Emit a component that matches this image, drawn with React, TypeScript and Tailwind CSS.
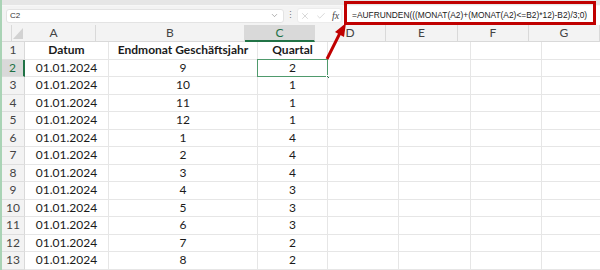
import React from "react";
import { X, Check, ChevronDown } from "lucide-react";

const colW = ["w-[84px]", "w-[149px]", "w-[70px]", "w-[71px]", "w-[72px]", "w-[71px]", "w-[71px]"];
const letters = ["A", "B", "C", "D", "E", "F", "G"];

const data: [string, string, string, string][] = [
  ["1", "Datum", "Endmonat Geschäftsjahr", "Quartal"],
  ["2", "01.01.2024", "9", "2"],
  ["3", "01.01.2024", "10", "1"],
  ["4", "01.01.2024", "11", "1"],
  ["5", "01.01.2024", "12", "1"],
  ["6", "01.01.2024", "1", "4"],
  ["7", "01.01.2024", "2", "4"],
  ["8", "01.01.2024", "3", "4"],
  ["9", "01.01.2024", "4", "3"],
  ["10", "01.01.2024", "5", "3"],
  ["11", "01.01.2024", "6", "3"],
  ["12", "01.01.2024", "7", "2"],
  ["13", "01.01.2024", "8", "2"],
];

export default function App() {
  return (
    <div className="relative w-[600px] h-[270px] overflow-hidden bg-white flex font-['Lato',sans-serif]">
      <div className="w-[2px] h-full bg-[#a9d3b5] shrink-0" />
      <div className="flex-1 flex flex-col min-w-0">
        {/* formula bar */}
        <div className="h-[25px] bg-[#f3f3f3] flex flex-col shrink-0">
          <div className="h-[6px] bg-[#e6e6e6] border-b border-[#f7f7f7]" />
          <div className="flex items-center h-[19px] font-['Liberation_Sans',sans-serif]">
            <div className="ml-[4px] w-[278px] h-[14px] bg-white rounded-[3px] border border-[#e3e3e3] flex items-center pl-[3px] pr-[4px] text-[8px] text-[#333]">
              <span className="flex-1">C2</span>
              <ChevronDown size={9} strokeWidth={1.5} className="text-[#777]" />
            </div>
            <div className="w-[13px] text-center text-[9px] text-[#777] leading-none">⋮</div>
            <div className="w-[45px] h-[15px] flex items-center bg-white rounded-[3px] border border-[#ececec]">
              <X size={10} strokeWidth={1.2} className="ml-[2px] text-[#b0b0b0]" />
              <Check size={10} strokeWidth={1.2} className="ml-[6px] text-[#b0b0b0]" />
              <span className="ml-[6px] text-[10px] italic font-['Liberation_Serif',serif] text-[#444] leading-none">fx</span>
            </div>
            <div className="flex-1 h-full bg-white ml-[1px] flex items-center pl-[9px] text-[8.4px] text-[#222] whitespace-nowrap">
              =AUFRUNDEN(((MONAT(A2)+(MONAT(A2)&lt;=B2)*12)-B2)/3;0)
            </div>
          </div>
        </div>

        {/* column header */}
        <div className="flex h-[17px] shrink-0">
          <div className="relative w-[23px] h-full bg-[#f3f3f3] border-r border-b border-[#d9d9d9]">
            <svg className="absolute left-[11px] top-[3px]" width="10" height="11" viewBox="0 0 10 11">
              <polygon points="10,0 10,11 0,11" fill="#d2d2d2" />
            </svg>
          </div>
          {letters.map((l, i) => (
            <div
              key={l}
              className={`${colW[i]} shrink-0 h-full flex items-center justify-center text-[12px] ${
                i === 2
                  ? "bg-[#d9d9d9] text-[#1e7145] border-b-2 border-[#217346] border-r border-r-[#d9d9d9]"
                  : "bg-[#f3f3f3] text-[#444] border-b border-r border-[#d9d9d9]"
              }`}
            >
              {l}
            </div>
          ))}
        </div>

        {/* rows */}
        {data.map((r, ri) => (
          <div key={r[0]} className="flex h-[17.5px] shrink-0">
            <div
              className={`w-[23px] shrink-0 h-full flex items-center justify-center text-[12px] border-b border-[#dedede] ${
                ri === 1
                  ? "bg-[#d9d9d9] text-[#1e7145] border-r-2 border-r-[#217346]"
                  : "bg-[#f3f3f3] text-[#444] border-r border-r-[#d9d9d9]"
              }`}
            >
              {r[0]}
            </div>
            {[r[1], r[2], r[3], "", "", "", ""].map((v, ci) => (
              <div
                key={ci}
                className={`${colW[ci]} shrink-0 relative h-full flex items-center justify-center text-[12px] text-[#1a1a1a] border-b border-r border-[#e6e6e6] ${
                  ri === 0 ? "font-bold" : ""
                }`}
              >
                {v}
                {ri === 1 && ci === 2 && (
                  <div className="absolute left-[-1px] top-[-1px] right-[-1px] bottom-[-1px] border-[1.5px] border-[#4f9a6c]">
                    <div className="absolute right-[-3px] bottom-[-3px] w-[4px] h-[4px] bg-[#217346] border border-white" />
                  </div>
                )}
              </div>
            ))}
          </div>
        ))}
      </div>

      {/* annotation: red box + arrow */}
      <div className="absolute left-[344px] top-[1px] w-[252px] h-[24px] border-[3px] border-[#c00000]" />
      <svg className="absolute left-0 top-0" width="600" height="270" viewBox="0 0 600 270">
        <line x1="327" y1="59" x2="340" y2="33" stroke="#c00000" strokeWidth="3" />
        <polygon points="346,23 344,37 335,32" fill="#c00000" />
      </svg>
    </div>
  );
}
